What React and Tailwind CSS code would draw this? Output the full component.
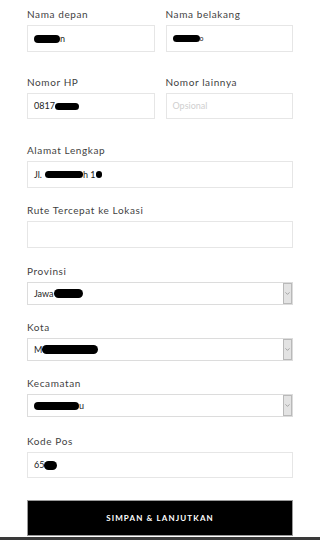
import { ChevronDown } from 'lucide-react';

// blacked-out part of a value (redaction blob)
function Blot({ w, h = 8 }) {
  return <span className="inline-block rounded-full bg-black align-middle" style={{ width: w, height: h }} />;
}

function Label({ children }) {
  return <div className="mb-[5px] text-[10px] leading-[12px] tracking-[0.06em] text-[#3f3f3f]">{children}</div>;
}

function Box({ children, h = 'h-[27px]' }) {
  return (
    <div className={`flex ${h} items-center border border-[#e6e6e6] bg-white px-[6px] text-[9px] text-[#222]`}>
      {children}
    </div>
  );
}

function Select({ children }) {
  return (
    <div className="flex h-[23px] items-stretch border border-[#dcdcdc] bg-white text-[9px] text-[#222]">
      <div className="flex flex-1 items-center px-[6px]">{children}</div>
      <div className="flex w-[9px] items-center justify-center border border-[#b9b9b9] bg-[#e3e3e3]">
        <ChevronDown className="h-[7px] w-[7px] text-[#777]" strokeWidth={2} />
      </div>
    </div>
  );
}

export default function App() {
  return (
    <div className="flex h-[540px] w-full flex-col overflow-hidden bg-white" style={{ fontFamily: 'Lato, "Open Sans", sans-serif' }}>
      <div className="flex flex-col px-[27px] pt-[8px]">
        <div className="grid grid-cols-2 gap-x-[11px]">
          <div>
            <Label>Nama depan</Label>
            <Box h="h-[27px]">
              <Blot w={26} />
              <span>n</span>
            </Box>
          </div>
          <div>
            <Label>Nama belakang</Label>
            <Box h="h-[27px]">
              <Blot w={27} h={7} />
              <span className="text-[7px]">o</span>
            </Box>
          </div>
        </div>

        <div className="mt-[24px] grid grid-cols-2 gap-x-[11px]">
          <div>
            <Label>Nomor HP</Label>
            <Box h="h-[26px]">
              <span>0817</span>
              <Blot w={24} h={7} />
            </Box>
          </div>
          <div>
            <Label>Nomor lainnya</Label>
            <Box h="h-[26px]">
              <span className="text-[#cfcfcf]">Opsional</span>
            </Box>
          </div>
        </div>

        <div className="mt-[25px]">
          <Label>Alamat Lengkap</Label>
          <Box>
            <span className="mr-[3px]">Jl.</span>
            <Blot w={38} h={7} />
            <span>h 1</span>
            <Blot w={6} h={7} />
          </Box>
        </div>

        <div className="mt-[16px]">
          <Label>Rute Tercepat ke Lokasi</Label>
          <Box>{' '}</Box>
        </div>

        <div className="mt-[17px]">
          <Label>Provinsi</Label>
          <Select>
            <span>Jawa</span>
            <Blot w={29} h={9} />
          </Select>
        </div>

        <div className="mt-[16px]">
          <Label>Kota</Label>
          <Select>
            <span>M</span>
            <Blot w={56} h={9} />
          </Select>
        </div>

        <div className="mt-[16px]">
          <Label>Kecamatan</Label>
          <Select>
            <Blot w={45} h={8} />
            <span>u</span>
          </Select>
        </div>

        <div className="mt-[18px]">
          <Label>Kode Pos</Label>
          <Box h="h-[26px]">
            <span>65</span>
            <Blot w={13} h={9} />
          </Box>
        </div>

        <button className="mt-[22px] h-[36px] w-full border border-[#9a9a9a] bg-black text-[8px] font-bold tracking-[0.14em] text-white">
          SIMPAN &amp; LANJUTKAN
        </button>
      </div>
      <div className="mt-[1px] h-[3px] shrink-0 bg-[#3a3a3a]" />
    </div>
  );
}
